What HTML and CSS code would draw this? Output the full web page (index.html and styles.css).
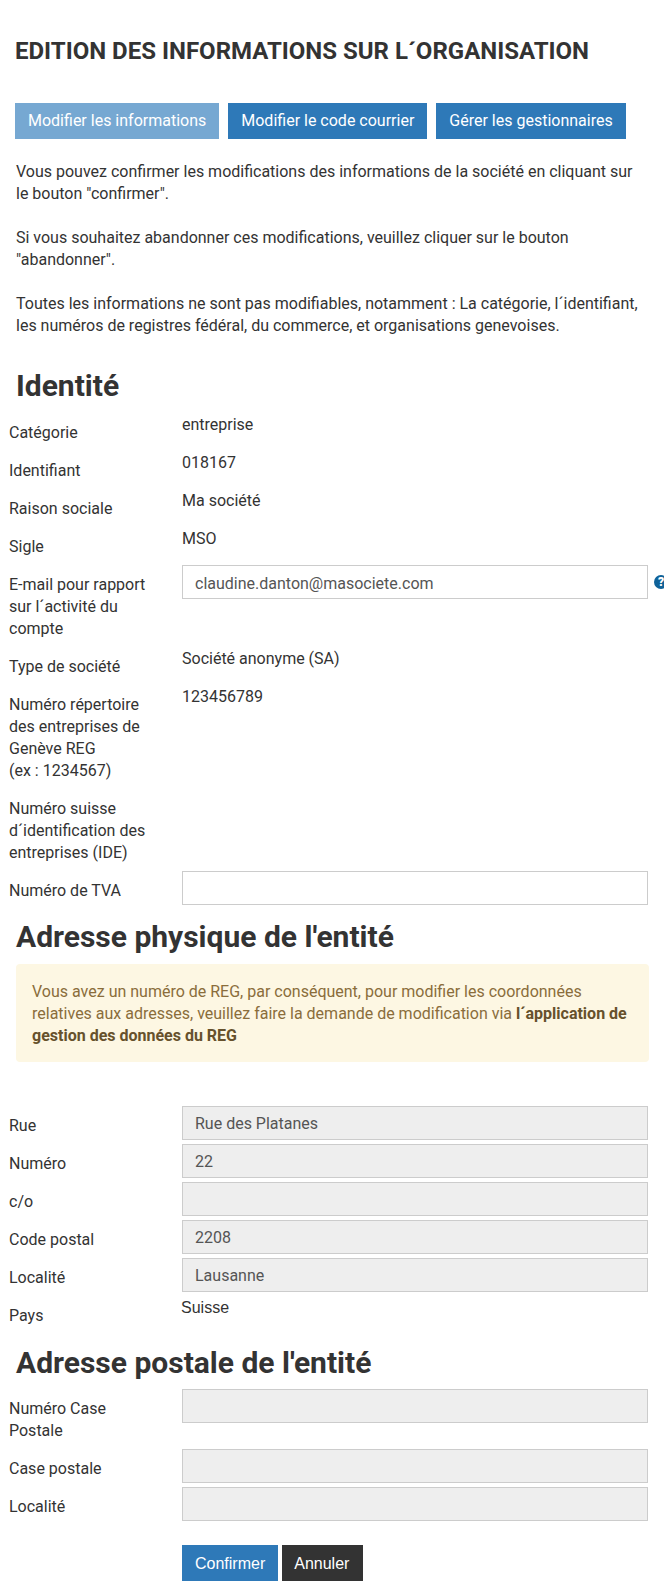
FILE: index.html
```html
<!DOCTYPE html>
<html lang="fr">
<head>
    <meta charset="UTF-8">
    <meta name="viewport" content="width=device-width, initial-scale=1.0">
    <title>Edition des informations sur l´organisation</title>
    <link rel="stylesheet" href="styles.css">
</head>
<body>

    <div class="container">
        <h1>EDITION DES INFORMATIONS SUR L´ORGANISATION</h1>

        <div class="tabs">
            <a class="btn btn-active">Modifier les informations</a>
            <a class="btn">Modifier le code courrier</a>
            <a class="btn">Gérer les gestionnaires</a>
        </div>

        <div class="intro">
            <p>Vous pouvez confirmer les modifications des informations de la société en cliquant sur le bouton "confirmer".</p>
            <p>Si vous souhaitez abandonner ces modifications, veuillez cliquer sur le bouton "abandonner".</p>
            <p>Toutes les informations ne sont pas modifiables, notamment : La catégorie, l´identifiant, les numéros de registres fédéral, du commerce, et organisations genevoises.</p>
        </div>

        <h2 class="titre-identite">Identité</h2>

        <div class="identite">
            <div class="row"><label>Catégorie</label><div class="value">entreprise</div></div>
            <div class="row"><label>Identifiant</label><div class="value">018167</div></div>
            <div class="row"><label>Raison sociale</label><div class="value">Ma société</div></div>
            <div class="row"><label>Sigle</label><div class="value">MSO</div></div>
            <div class="row">
                <label>E-mail pour rapport sur l´activité du compte</label>
                <div class="field">
                    <input type="text" value="claudine.danton@masociete.com">
                    <span class="help">?</span>
                </div>
            </div>
            <div class="row"><label>Type de société</label><div class="value">Société anonyme (SA)</div></div>
            <div class="row"><label>Numéro répertoire des entreprises de Genève REG<br>(ex : 1234567)</label><div class="value">123456789</div></div>
            <div class="row"><label>Numéro suisse<br>d´identification des entreprises (IDE)</label></div>
            <div class="row">
                <label>Numéro de TVA</label>
                <div class="field"><input type="text"></div>
            </div>
        </div>

        <h2 class="titre-physique">Adresse physique de l'entité</h2>

        <div class="alerte">
            Vous avez un numéro de REG, par conséquent, pour modifier les coordonnées relatives aux adresses, veuillez faire la demande de modification via <b>l´application de gestion des données du REG</b>
        </div>

        <div class="adresse">
            <div class="row"><label>Rue</label><div class="field"><input type="text" value="Rue des Platanes" disabled></div></div>
            <div class="row"><label>Numéro</label><div class="field"><input type="text" value="22" disabled></div></div>
            <div class="row"><label>c/o</label><div class="field"><input type="text" disabled></div></div>
            <div class="row"><label>Code postal</label><div class="field"><input type="text" value="2208" disabled></div></div>
            <div class="row"><label>Localité</label><div class="field"><input type="text" value="Lausanne" disabled></div></div>
        </div>
        <div class="row row-pays"><label>Pays</label><div class="value pays">Suisse</div></div>

        <h2 class="titre-postale">Adresse postale de l'entité</h2>

        <div class="adresse">
            <div class="row"><label>Numéro Case Postale</label><div class="field"><input type="text" disabled></div></div>
            <div class="row"><label>Case postale</label><div class="field"><input type="text" disabled></div></div>
            <div class="row"><label>Localité</label><div class="field"><input type="text" disabled></div></div>
        </div>

        <div class="actions">
            <button class="btn-form">Confirmer</button>
            <button class="btn-form btn-annuler">Annuler</button>
        </div>
    </div>

</body>
</html>
```

FILE: styles.css
```css
html, body {
    overflow: hidden;
}

body {
    font-family: Roboto, sans-serif;
    font-size: 16px;
    line-height: 22px;
    margin: 0;
    padding: 0;
    background-color: #fff;
    color: #333;
}

.container {
    height: 1591px;
    overflow: hidden;
}

h1 {
    font-size: 24px;
    line-height: 26px;
    font-weight: 700;
    margin: 0;
    padding: 38px 0 0 15px;
}

.tabs {
    display: flex;
    gap: 9px;
    margin-top: 39px;
    padding-left: 15px;
}

.btn {
    display: block;
    padding: 7px 13px;
    background-color: #2e79b8;
    color: #fff;
}

.btn-active {
    background-color: #76a8d2;
}

.intro {
    margin-top: 22px;
    padding: 0 16px;
}

.intro p {
    margin: 0 0 22px;
}

h2 {
    font-size: 30px;
    line-height: 36px;
    font-weight: 700;
    margin: 0;
    padding-left: 16px;
}

.titre-identite {
    margin-top: 31px;
    margin-bottom: 10px;
}

.titre-physique {
    margin-top: 13px;
    margin-bottom: 9px;
}

.titre-postale {
    margin-top: 14px;
    margin-bottom: 8px;
}

.row {
    display: flex;
    margin-bottom: 4px;
    padding-left: 9px;
}

.row-pays {
    padding-top: 1px;
}

label {
    width: 148px;
    margin-right: 25px;
    padding: 8px 0 4px;
    flex-shrink: 0;
}

.adresse label {
    padding: 9px 0 3px;
}

.value {
    padding-bottom: 12px;
}

.pays {
    font-family: "Liberation Sans", sans-serif;
    margin-left: -1px;
}

.field {
    display: flex;
    width: 466px;
}

.identite .field {
    margin-top: -1px;
}

input {
    box-sizing: border-box;
    width: 466px;
    height: 34px;
    padding: 6px 12px;
    border: 1px solid #ccc;
    font-family: Roboto, sans-serif;
    font-size: 16px;
    color: #555;
    flex-shrink: 0;
}

.identite input {
    padding: 8px 12px 6px;
}

input:disabled {
    background-color: #eee;
}

.help {
    display: block;
    width: 14px;
    height: 14px;
    margin: 10px 0 0 6px;
    border-radius: 50%;
    background-color: #0f6299;
    color: #fff;
    font-size: 12px;
    font-weight: 900;
    line-height: 14px;
    text-align: center;
    flex-shrink: 0;
}

.alerte {
    margin: 0 15px 44px 16px;
    padding: 17px 16px 15px;
    background-color: #fdf7e3;
    border-radius: 4px;
    color: #8a6d3b;
}

.alerte b {
    color: #66512c;
}

.actions {
    display: flex;
    gap: 4px;
    margin-top: 24px;
    padding-left: 182px;
}

.btn-form {
    height: 36px;
    padding: 2px 13px 0;
    border: none;
    background-color: #2e79b8;
    color: #fff;
    font-family: "Liberation Sans", sans-serif;
    font-size: 16px;
}

.btn-annuler {
    background-color: #333;
    padding: 2px 14px 0 12px;
}
```
